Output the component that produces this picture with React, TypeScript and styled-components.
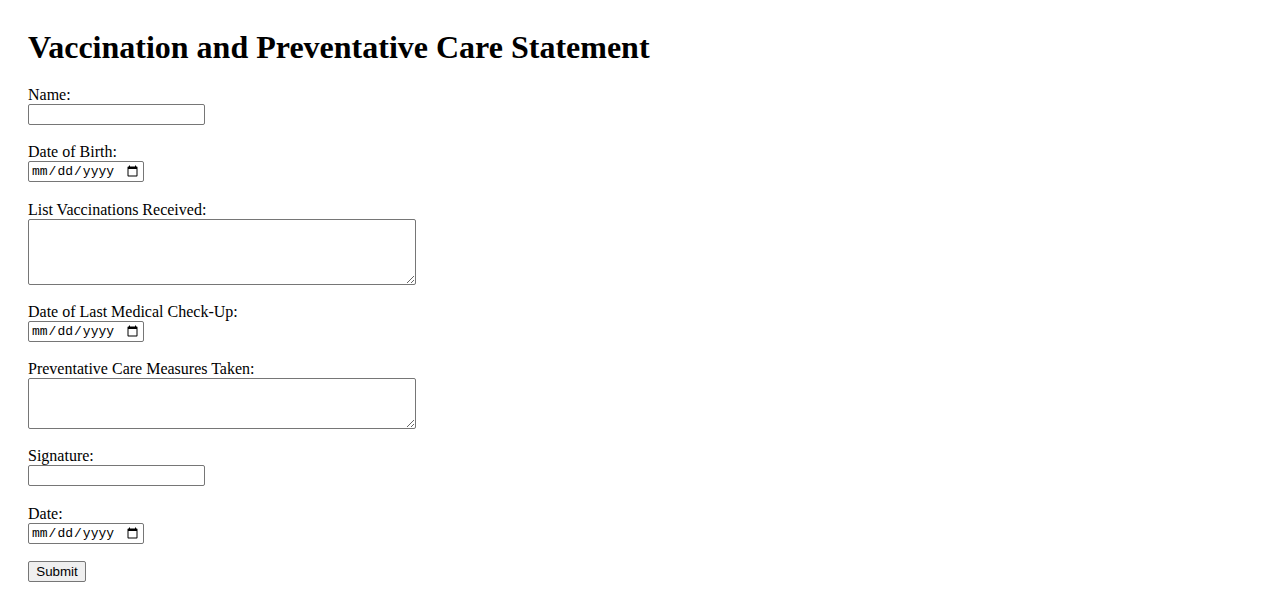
import React from "react";
import styled, { createGlobalStyle } from "styled-components";

const GlobalStyle = createGlobalStyle`
  html, body {
    margin: 0;
    padding: 0;
    background: #ffffff;
  }
  body {
    font-family: "Liberation Serif", "Times New Roman", serif;
    font-size: 16px;
    color: #000000;
  }
`;

const Page = styled.div`
  padding: 29px 28px 20px 28px;
`;

const Title = styled.h1`
  margin: 0 0 19px 0;
  font-family: "Liberation Serif", "Times New Roman", serif;
  font-size: 32px;
  font-weight: bold;
  line-height: 37px;
`;

const Form = styled.form`
  display: flex;
  flex-direction: column;
  align-items: flex-start;
  gap: 17.3px;
`;

const Field = styled.div`
  display: flex;
  flex-direction: column;
  align-items: flex-start;
`;

const Label = styled.label`
  display: block;
  box-sizing: border-box;
  height: 19px;
  padding-top: 1px;
  line-height: 18px;
  font-size: 16px;
`;

const TextInput = styled.input`
  box-sizing: border-box;
  width: 177px;
  height: 21px;
  margin: 0;
  padding: 1px 2px;
  border: 1px solid #767676;
  border-radius: 2px;
  font-family: "Liberation Sans", Arial, sans-serif;
  font-size: 13.33px;
  background: #ffffff;
`;

const DateInput = styled.input`
  box-sizing: border-box;
  width: 116px;
  height: 21px;
  margin: 0;
  padding: 1px 2px;
  border: 1px solid #767676;
  border-radius: 2px;
  font-family: "Liberation Mono", "Courier New", monospace;
  font-size: 13px;
  background: #ffffff;
`;

const TextArea = styled.textarea<{ $h: number }>`
  box-sizing: border-box;
  width: 388px;
  height: ${(p) => p.$h}px;
  margin: 0;
  padding: 2px;
  border: 1px solid #767676;
  border-radius: 2px;
  font-family: "Liberation Mono", monospace;
  font-size: 13.33px;
  background: #ffffff;
`;

const SubmitButton = styled.button`
  box-sizing: border-box;
  height: 21px;
  width: 58px;
  margin: 0;
  padding: 1px 6px;
  border: 1px solid #767676;
  border-radius: 2px;
  background: #efefef;
  font-family: "Liberation Sans", Arial, sans-serif;
  font-size: 13.33px;
  color: #000000;
`;

export default function App() {
  return (
    <>
      <GlobalStyle />
      <Page>
        <Title>Vaccination and Preventative Care Statement</Title>
        <Form onSubmit={(e) => e.preventDefault()}>
          <Field>
            <Label htmlFor="name">Name:</Label>
            <TextInput type="text" id="name" name="name" />
          </Field>
          <Field>
            <Label htmlFor="dob">Date of Birth:</Label>
            <DateInput type="date" id="dob" name="dob" />
          </Field>
          <Field>
            <Label htmlFor="vaccinations">List Vaccinations Received:</Label>
            <TextArea id="vaccinations" name="vaccinations" $h={66} />
          </Field>
          <Field>
            <Label htmlFor="checkup">Date of Last Medical Check-Up:</Label>
            <DateInput type="date" id="checkup" name="checkup" />
          </Field>
          <Field>
            <Label htmlFor="care">Preventative Care Measures Taken:</Label>
            <TextArea id="care" name="care" $h={51} />
          </Field>
          <Field>
            <Label htmlFor="signature">Signature:</Label>
            <TextInput type="text" id="signature" name="signature" />
          </Field>
          <Field>
            <Label htmlFor="date">Date:</Label>
            <DateInput type="date" id="date" name="date" />
          </Field>
          <SubmitButton type="submit">Submit</SubmitButton>
        </Form>
      </Page>
    </>
  );
}
